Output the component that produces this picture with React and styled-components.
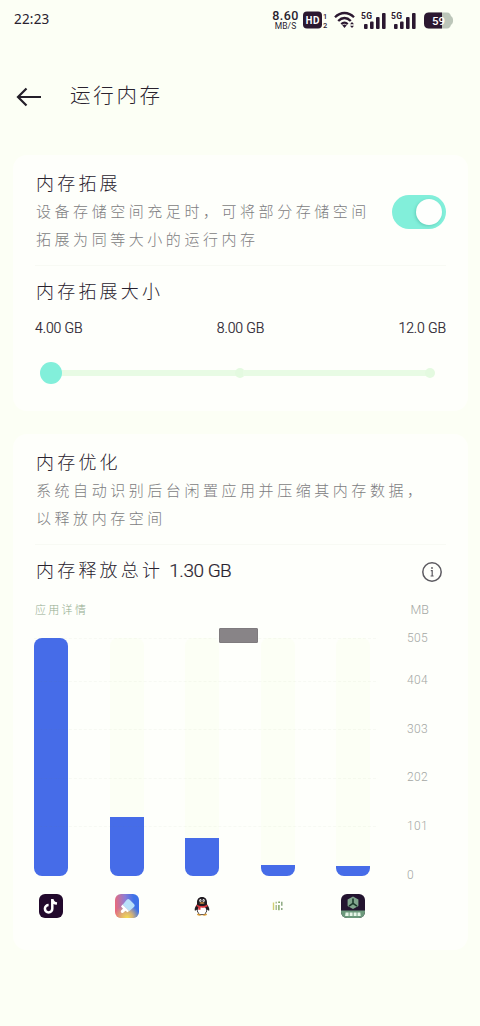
import React from "react"
import styled, { createGlobalStyle } from "styled-components"

const GlobalStyle = createGlobalStyle`
  * {
    box-sizing: border-box;
  }

  body {
    margin: 0;
    background-color: #fcfff5;
    color: #29222e;
    font-family: Roboto, "Noto Sans CJK SC", sans-serif;
  }
`

const Page = styled.div`
  width: 480px;
  height: 1026px;
  overflow: hidden;
  display: flex;
  flex-direction: column;
`

const StatusBar = styled.div`
  height: 40px;
  padding: 0 26px 0 14px;
  display: flex;
  justify-content: space-between;
  align-items: center;
`

const Clock = styled.span`
  margin-bottom: 2px;
  font-family: "Noto Sans", sans-serif;
  font-size: 13.5px;
  letter-spacing: 0.2px;
`

const StatusIcons = styled.div`
  display: flex;
  align-items: center;
`

const Speed = styled.div`
  width: 27px;
  margin-right: 4px;
  display: flex;
  flex-direction: column;
  align-items: center;
  font-size: 12.5px;
  font-weight: 500;
  line-height: 12px;
  letter-spacing: 0.4px;
  white-space: nowrap;

  small {
    font-size: 8.5px;
    font-weight: 400;
    line-height: 8px;
    letter-spacing: 0.1px;
  }
`

const Header = styled.header`
  height: 115px;
  padding: 0 0 2px 15px;
  display: flex;
  align-items: center;
  gap: 26px;
`

const PageTitle = styled.h1`
  margin: 0 0 5px;
  font-size: 20.5px;
  font-weight: 300;
  letter-spacing: 2.7px;
`

const Card = styled.section`
  height: ${props => props.$height}px;
  margin: 0 12px 23px 13px;
  padding: 15px 22px 0;
  border-radius: 14px;
  background-color: #fefffb;
`

const SettingRow = styled.div`
  display: flex;
  justify-content: space-between;
  align-items: center;
`

const CardTitle = styled.h2`
  margin: 0;
  padding-left: 1px;
  font-size: 18px;
  font-weight: 300;
  line-height: 28px;
  letter-spacing: 3.2px;
  white-space: nowrap;

  span {
    margin-left: 2px;
    font-size: 19px;
    letter-spacing: -0.5px;
    -webkit-text-stroke: 0.2px #29222e;
  }
`

const Description = styled.p`
  margin: 0;
  padding-left: 1px;
  color: #7d7d81;
  font-size: 15px;
  font-weight: 300;
  line-height: 28px;
  letter-spacing: 3.55px;
  white-space: nowrap;
`

const Divider = styled.div`
  height: 1px;
  margin: 11px 0 12px;
  background-color: #f8faf4;
`

const Switch = styled.div`
  width: 54px;
  height: 34px;
  padding: 4px;
  border-radius: 17px;
  flex: none;
  display: flex;
  justify-content: flex-end;
  background-color: #82efda;
`

const Knob = styled.div`
  width: 26px;
  height: 26px;
  border-radius: 50%;
  background-color: #fefffd;
  box-shadow: -1px 1px 3px rgba(40, 150, 130, 0.35);
`

const SizeLabels = styled.div`
  margin-top: 12px;
  display: flex;
  justify-content: space-between;
  font-size: 14px;
  font-weight: 300;
  line-height: 20px;
  letter-spacing: -0.1px;
  -webkit-text-stroke: 0.2px #29222e;
`

const Slider = styled.div`
  height: 22px;
  margin: 24px 11px 0 5px;
  display: flex;
  align-items: center;
`

const Thumb = styled.div`
  width: 22px;
  height: 22px;
  border-radius: 50%;
  flex: none;
  z-index: 1;
  background-color: #82efda;
`

const Track = styled.div`
  flex: ${props => props.$grow};
  height: 6px;
  margin: 0 -2px;
  background-color: #e8fbe4;
`

const Stop = styled.div`
  width: 10px;
  height: 10px;
  border-radius: 50%;
  flex: none;
  background-color: #e4fae0;
`

const Legend = styled.div`
  height: 20px;
  margin-top: 14px;
  padding-right: 17px;
  display: flex;
  justify-content: space-between;
  align-items: center;
  color: #a4a7a4;
  font-size: 12.5px;
  font-weight: 300;
`

const LegendLink = styled.span`
  color: #93ab8e;
  font-size: 11px;
  letter-spacing: 2.3px;
`

const Chart = styled.div`
  display: flex;
  justify-content: space-between;
`

const Plot = styled.div`
  position: relative;
  width: 336px;
  margin-top: 19px;
  margin-left: -1px;
`

const Bars = styled.div`
  height: 237.5px;
  display: flex;
  justify-content: space-between;
`

const BarTrack = styled.div`
  width: 34px;
  border-radius: 8px;
  overflow: hidden;
  display: flex;
  align-items: flex-end;
  background-color: #fcfff5;
`

const Bar = styled.div`
  width: 100%;
  background-color: #466ce8;
`

const GridLine = styled.div`
  position: absolute;
  top: ${props => props.$top}px;
  left: 0;
  width: 342px;
  border-top: 1px dashed rgba(120, 130, 100, 0.05);
`

const AppIcons = styled.div`
  margin-top: 18.5px;
  padding: 0 5px;
  display: flex;
  justify-content: space-between;
`

const Marker = styled.div`
  position: absolute;
  top: -10px;
  left: 185px;
  width: 39px;
  height: 15px;
  border: 1px solid #7f7b7e;
  border-radius: 1px;
  background-color: #888487;
`

const Axis = styled.div`
  width: 39px;
  margin-top: 1px;
  color: #a4a7a4;
  font-size: 12px;
  font-weight: 300;
  letter-spacing: 0.35px;
`

const Tick = styled.div`
  height: ${props => (props.$first ? 36 : 48.6)}px;
  display: flex;
  align-items: center;
`

const HdIcon = () => (
  <svg width="26" height="18" viewBox="0 0 26 18">
    <rect x="0" y="0.5" width="19" height="17" rx="4" fill="#2b1830" />
    <text x="2.6" y="13.2" fill="#fff" fontSize="11" fontWeight="700" fontFamily="'Open Sans', sans-serif" textLength="14" lengthAdjust="spacingAndGlyphs">HD</text>
    <text x="20" y="8" fill="#2b1830" fontSize="7.5" fontWeight="500" fontFamily="Roboto, sans-serif">1</text>
    <text x="20" y="16.5" fill="#2b1830" fontSize="7.5" fontWeight="500" fontFamily="Roboto, sans-serif">2</text>
  </svg>
)

const WifiIcon = () => (
  <svg width="22" height="18" viewBox="0 0 22 18" fill="none" stroke="#2b1830" strokeWidth="2.3" style={{ marginLeft: 5 }}>
    <path d="M1 6.2C6.6 .6 14.4 .6 20 6.2" />
    <path d="M4.2 10C8.1 6 12.9 6 16.8 10" />
    <path d="M7.3 13.1c2.2-2 4.2-2 6.4 0" />
    <path d="M8.3 14.3c1.4-1.2 3-1.2 4.4 0l-2.2 2.7z" fill="#2b1830" stroke="none" />
    <path d="M16 13.2l2-2.2 2 2.2zM16 14.8l2 2.2 2-2.2z" fill="#2b1830" stroke="none" />
  </svg>
)

const SignalIcon = () => (
  <svg width="25" height="19" viewBox="0 0 25 19" fill="#2b1830" style={{ marginLeft: 5 }}>
    <text x="0" y="7.5" fontSize="8.5" fontWeight="700" fontFamily="Roboto, sans-serif" textLength="11">5G</text>
    <rect x="3" y="13" width="3.6" height="5" rx="1" />
    <rect x="9" y="10.5" width="3.6" height="7.5" rx="1" />
    <rect x="15" y="6" width="3.6" height="12" rx="1" />
    <rect x="21" y="2" width="3.6" height="16" rx="1" />
  </svg>
)

const BatteryIcon = () => (
  <svg width="30" height="17" viewBox="0 0 30 17" style={{ marginLeft: 8 }}>
    <path d="M4 .5h19c2.8 0 3.4 1.8 4 3.7 2.8.8 2.8 7.8 0 8.6-.6 1.9-1.2 3.7-4 3.7H4z" fill="#bcc6b9" />
    <path d="M5 .5h13v16H5c-3.4 0-5-1.6-5-5v-6c0-3.4 1.6-5 5-5z" fill="#2b1830" />
    <text x="8" y="12.7" fill="#fff" fontSize="11.5" fontWeight="500" fontFamily="Roboto, sans-serif">59</text>
  </svg>
)

const BackIcon = () => (
  <svg width="29" height="24" viewBox="0 0 29 24" fill="none" stroke="#241f29" strokeWidth="2.2">
    <path d="M26 12H3M11.5 3.5L3 12l8.5 8.5" />
  </svg>
)

const InfoIcon = () => (
  <svg width="22" height="22" viewBox="0 0 22 22" fill="none" stroke="#5c5a60" strokeWidth="1.5" style={{ marginRight: 3, marginTop: 2 }}>
    <circle cx="11" cy="11" r="9.2" />
    <path d="M9.8 9.7h1.4v5M9.6 15h3" strokeWidth="1.2" />
    <circle cx="11" cy="7" r=".9" fill="#5c5a60" stroke="none" />
  </svg>
)

const TiktokIcon = () => (
  <svg width="24" height="24" viewBox="0 0 24 24">
    <rect width="24" height="24" rx="6" fill="#22092c" />
    <path d="M13.3 5v9.7a3.7 3.7 0 1 1-3.7-3.7M13.3 5.2c.4 2.8 1.9 4.1 4.7 4.4" fill="none" stroke="#fff" strokeWidth="2.5" />
  </svg>
)

const ThemeIcon = () => (
  <svg width="24" height="24" viewBox="0 0 24 24">
    <defs>
      <linearGradient id="themeBase" x1="0" y1=".4" x2="1" y2=".3">
        <stop offset="0" stopColor="#e96b7c" />
        <stop offset=".45" stopColor="#8b7dd6" />
        <stop offset=".8" stopColor="#3e72e8" />
      </linearGradient>
      <radialGradient id="themeGlow" cx=".5" cy="1" r=".55">
        <stop offset="0" stopColor="#f6df50" />
        <stop offset=".45" stopColor="#eec15d" stopOpacity=".8" />
        <stop offset="1" stopColor="#eec15d" stopOpacity="0" />
      </radialGradient>
    </defs>
    <rect width="24" height="24" rx="6" fill="url(#themeBase)" />
    <rect width="24" height="24" rx="6" fill="url(#themeGlow)" />
    <path d="M12 5.500q1.200-1 2.400 0l4.800 4.800q1 1.200 0 2.400l-5 4.500-6.500-6.500z" fill="#b9e1fa" />
    <path d="M7.5 10.500l6.500 6.500-1.500 1.200-2-1.500-2.300 2c-1.700.7-3-.7-2.200-2.200L8 14.800l-2-2.300z" fill="#fff" />
  </svg>
)

const QqIcon = () => (
  <svg width="24" height="24" viewBox="0 0 24 24">
    <path d="M7 20.500c0-2 10-2 10 0 0 1.300-3.500 1.500-5 .5-1.500 1-5 .8-5-.5z" fill="#d99b36" />
    <path d="M12 3c-3.400 0-5 2.400-5 5.500v2c-1.400 1.600-2.600 4-2.300 5.800.3 1 1.300.2 1.900-.7C7 19 9.200 21 12 21s5-2 5.400-5.400c.6.900 1.600 1.700 1.900.7.3-1.800-.9-4.200-2.300-5.800v-2C17 5.400 15.400 3 12 3z" fill="#201b20" />
    <ellipse cx="12" cy="16.3" rx="4.3" ry="4" fill="#fff" />
    <ellipse cx="10.4" cy="6.5" rx="1.1" ry="1.5" fill="#fff" />
    <ellipse cx="13.6" cy="6.5" rx="1.1" ry="1.5" fill="#fff" />
    <circle cx="10.7" cy="6.7" r=".5" fill="#201b20" />
    <circle cx="13.3" cy="6.7" r=".5" fill="#201b20" />
    <ellipse cx="12" cy="9" rx="2.6" ry=".7" fill="#e2a04b" />
    <path d="M6.7 10.400c3.200 2 7.400 2 10.600 0l.4 1.800c-2.200 1.300-5 1.700-7.200 1.400v2.200H8.300V13l-2-.9z" fill="#d9363e" />
  </svg>
)

const DotsIcon = () => (
  <svg width="24" height="24" viewBox="0 0 24 24" fill="none" strokeWidth="1.4">
    <path d="M7.500 8.500v7.500" stroke="#d3cf72" />
    <path d="M10.200 7.800v1.600M10.200 11v5" stroke="#a8b98b" />
    <path d="M12.200 8.200h1.800M12.900 11v5.200" stroke="#7ea35e" />
    <path d="M15.800 7.800v4M15.800 14v2" stroke="#86a47b" />
  </svg>
)

const CubeIcon = () => (
  <svg width="24" height="24" viewBox="0 0 24 24">
    <defs>
      <clipPath id="cubeClip">
        <rect width="24" height="24" rx="6" />
      </clipPath>
    </defs>
    <g clipPath="url(#cubeClip)">
      <rect width="24" height="24" fill="#23142f" />
      <rect y="16.5" width="24" height="7.5" fill="#6d9a7c" />
    </g>
    <path d="M12 2.500l5.400 3.100v6.300L12 15l-5.400-3.100V5.600z" fill="#81a58d" />
    <path d="M12 4.500v4.800M12 9.300l-4 2.800M12 9.300l4 2.800" fill="none" stroke="#1c3b2c" strokeWidth="1.6" />
    <path d="M4.600 18.500h3V22H4.100zM8.600 18.500h3V22h-3zM12.600 18.500h3V22h-3zM16.500 18.500h2.800l.4 3.500h-3.200z" fill="#e6f6e7" />
  </svg>
)

const apps = [
  { name: "tiktok", size: 238, Icon: TiktokIcon },
  { name: "theme", size: 58.5, Icon: ThemeIcon },
  { name: "qq", size: 37.5, Icon: QqIcon },
  { name: "dots", size: 11, Icon: DotsIcon },
  { name: "cube", size: 9.5, Icon: CubeIcon },
]

const ticks = [505, 404, 303, 202, 101, 0]
const gridLines = [0, 43, 91, 140, 188]

const App = () => {
  return (
    <Page>
      <GlobalStyle />
      <StatusBar>
        <Clock>22:23</Clock>
        <StatusIcons>
          <Speed>
            8.60
            <small>MB/S</small>
          </Speed>
          <HdIcon />
          <WifiIcon />
          <SignalIcon />
          <SignalIcon />
          <BatteryIcon />
        </StatusIcons>
      </StatusBar>
      <Header>
        <BackIcon />
        <PageTitle>运行内存</PageTitle>
      </Header>
      <Card $height={256}>
        <SettingRow>
          <div>
            <CardTitle>内存拓展</CardTitle>
            <Description>
              设备存储空间充足时，可将部分存储空间
              <br />
              拓展为同等大小的运行内存
            </Description>
          </div>
          <Switch>
            <Knob />
          </Switch>
        </SettingRow>
        <Divider />
        <CardTitle>内存拓展大小</CardTitle>
        <SizeLabels>
          <span>4.00 GB</span>
          <span>8.00 GB</span>
          <span>12.0 GB</span>
        </SizeLabels>
        <Slider>
          <Thumb />
          <Track $grow={173} />
          <Stop />
          <Track $grow={180} />
          <Stop />
        </Slider>
      </Card>
      <Card $height={516}>
        <CardTitle>内存优化</CardTitle>
        <Description>
          系统自动识别后台闲置应用并压缩其内存数据，
          <br />
          以释放内存空间
        </Description>
        <Divider />
        <SettingRow>
          <CardTitle>
            内存释放总计<span> 1.30 GB</span>
          </CardTitle>
          <InfoIcon />
        </SettingRow>
        <Legend>
          <LegendLink>应用详情</LegendLink>
          <span>MB</span>
        </Legend>
        <Chart>
          <Plot>
            <Bars>
              {apps.map(({ name, size }) => (
                <BarTrack key={name}>
                  <Bar style={{ height: size }} />
                </BarTrack>
              ))}
            </Bars>
            {gridLines.map(top => (
              <GridLine key={top} $top={top} />
            ))}
            <Marker />
            <AppIcons>
              {apps.map(({ name, Icon }) => (
                <Icon key={name} />
              ))}
            </AppIcons>
          </Plot>
          <Axis>
            {ticks.map((tick, index) => (
              <Tick key={tick} $first={index === 0}>
                {tick}
              </Tick>
            ))}
          </Axis>
        </Chart>
      </Card>
    </Page>
  )
}

export default App
